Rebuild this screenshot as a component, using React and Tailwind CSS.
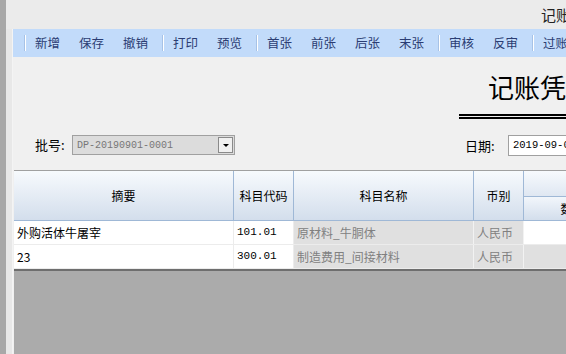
import React from "react";

const cjk = { fontFamily: '"Noto Sans CJK SC", "Noto Sans", sans-serif' };
const mono = { fontFamily: '"Liberation Mono", "DejaVu Sans Mono", monospace' };

const groups = [
  ["新增", "保存", "撤销"],
  ["打印", "预览"],
  ["首张", "前张", "后张", "末张"],
  ["审核", "反审"],
  ["过账"],
];

function Sep() {
  return (
    <div className="flex h-[16px] shrink-0">
      <div className="w-[1px] h-full bg-[#a7c2e6]" />
      <div className="w-[1px] h-full bg-white" />
    </div>
  );
}

export default function App() {
  return (
    <div className="w-[566px] h-[354px] overflow-hidden flex bg-[#ebebeb]" style={cjk}>
      <div className="w-[6px] h-full bg-[#a8a8a8] shrink-0" />
      <div className="flex-1 flex flex-col min-w-0">
        {/* top title bar */}
        <div className="h-[29px] flex items-center shrink-0 overflow-hidden">
          <div className="ml-[535px] whitespace-nowrap text-[15px] text-[#222] leading-none shrink-0">记账凭证</div>
        </div>
        <div className="flex-1 flex min-h-0">
          <div className="w-[7px] h-full bg-[#e8e8e8] border-r border-[#f4f4f4] shrink-0" />
          <div className="flex-1 flex flex-col min-w-0 bg-[#f0f0f0]">
            {/* toolbar */}
            <div className="h-[28px] bg-[#c2dbfa] flex items-center pl-[11px] whitespace-nowrap overflow-hidden shrink-0">
              {groups.map((g, gi) => (
                <div key={gi} className="flex items-center shrink-0">
                  <Sep />
                  <div className="flex items-center pl-[9px]">
                    {g.map((t, ti) => (
                      <span
                        key={t}
                        className={"text-[12.5px] text-[#2b3d73] leading-none shrink-0 " + (ti === g.length - 1 ? "w-[39px]" : "w-[44px]")}
                      >
                        {t}
                      </span>
                    ))}
                  </div>
                </div>
              ))}
            </div>
            {/* title */}
            <div className="h-[63px] flex flex-col items-end shrink-0 overflow-hidden">
              <div className="mt-[16px] w-[78px] overflow-hidden whitespace-nowrap text-[26px] leading-[28px] text-black">
                <span className="inline-block w-[110px]">记账凭证</span>
              </div>
              <div className="mt-[13px] w-[107px] flex flex-col gap-[1.5px]">
                <div className="h-[1.5px] bg-black" />
                <div className="h-[2px] bg-black" />
              </div>
            </div>
            {/* fields */}
            <div className="h-[50px] flex items-start shrink-0 overflow-hidden">
              <div className="flex items-center mt-[15px] ml-[22px] shrink-0">
                <span className="text-[13px] text-black w-[37px]">批号:</span>
                <div className="w-[163px] h-[20px] bg-[#dcdcdc] border border-[#a0a0a0] flex items-center justify-between pl-[4px] pr-[1px]">
                  <span className="text-[10px] text-[#777]" style={mono}>DP-20190901-0001</span>
                  <div className="w-[15px] h-[16px] bg-[#f0f0f0] border border-[#8a8a8a] flex items-center justify-center">
                    <div className="w-0 h-0 border-l-[3px] border-r-[3px] border-t-[3px] border-l-transparent border-r-transparent border-t-black" />
                  </div>
                </div>
              </div>
              <div className="flex items-center mt-[15px] ml-[230px] shrink-0">
                <span className="text-[13px] text-black w-[43px]">日期:</span>
                <div className="w-[80px] h-[21px] bg-white border border-[#a0a0a0] flex items-center pl-[4px] whitespace-nowrap">
                  <span className="text-[10.5px] text-black" style={mono}>2019-09-01</span>
                </div>
              </div>
            </div>
            {/* table */}
            <div className="flex-1 ml-[1px] bg-[#ababab] border-t border-[#a0a0a0] overflow-hidden">
              <div className="w-[800px]">
                {/* header */}
                <div className="flex h-[50px] text-[12px] text-black border-b border-[#9fb8d6]">
                  {[
                    ["摘要", 220],
                    ["科目代码", 60],
                    ["科目名称", 180],
                    ["币别", 50],
                  ].map(([t, w]) => (
                    <div
                      key={t}
                      className="h-full shrink-0 flex items-center justify-center border-r border-[#9fb8d6] bg-gradient-to-b from-[#f7fafd] to-[#d3deec]"
                      style={{ width: w }}
                    >
                      {t}
                    </div>
                  ))}
                  <div className="w-[196px] shrink-0 flex flex-col">
                    <div className="h-[26px] flex items-center justify-center border-b border-[#9fb8d6] bg-gradient-to-b from-[#f7fafd] to-[#dfe7f2]">外币</div>
                    <div className="flex-1 flex">
                      <div className="w-[98px] flex items-center justify-center border-r border-[#9fb8d6] bg-gradient-to-b from-[#f2f6fb] to-[#d3deec]">数量</div>
                      <div className="w-[98px] flex items-center justify-center bg-gradient-to-b from-[#f2f6fb] to-[#d3deec]">单价</div>
                    </div>
                  </div>
                </div>
                {/* rows */}
                {[
                  ["外购活体牛屠宰", "101.01", "原材料_牛胴体", "人民币", "bg-white"],
                  ["23", "300.01", "制造费用_间接材料", "人民币", "bg-[#e0e0e0]"],
                ].map(([a, b, c, d, last], i) => (
                  <div key={i} className="flex h-[24px] text-[12px] border-b border-[#ececec]">
                    <div className="w-[220px] shrink-0 bg-white border-r border-[#ececec] flex items-center pl-[3px] text-black">{a}</div>
                    <div className="w-[60px] shrink-0 bg-white border-r border-[#ececec] flex items-center pl-[3px] text-black text-[11px]" style={mono}>{b}</div>
                    <div className="w-[180px] shrink-0 bg-[#e0e0e0] border-r border-[#f2f2f2] flex items-center pl-[3px] text-[#808080]">{c}</div>
                    <div className="w-[50px] shrink-0 bg-[#e0e0e0] border-r border-[#f2f2f2] flex items-center pl-[3px] text-[#808080]">{d}</div>
                    <div className={"w-[196px] shrink-0 " + last}></div>
                  </div>
                ))}
                <div className="h-[2px] bg-[#6e6e6e]" />
              </div>
            </div>
          </div>
        </div>
      </div>
    </div>
  );
}
